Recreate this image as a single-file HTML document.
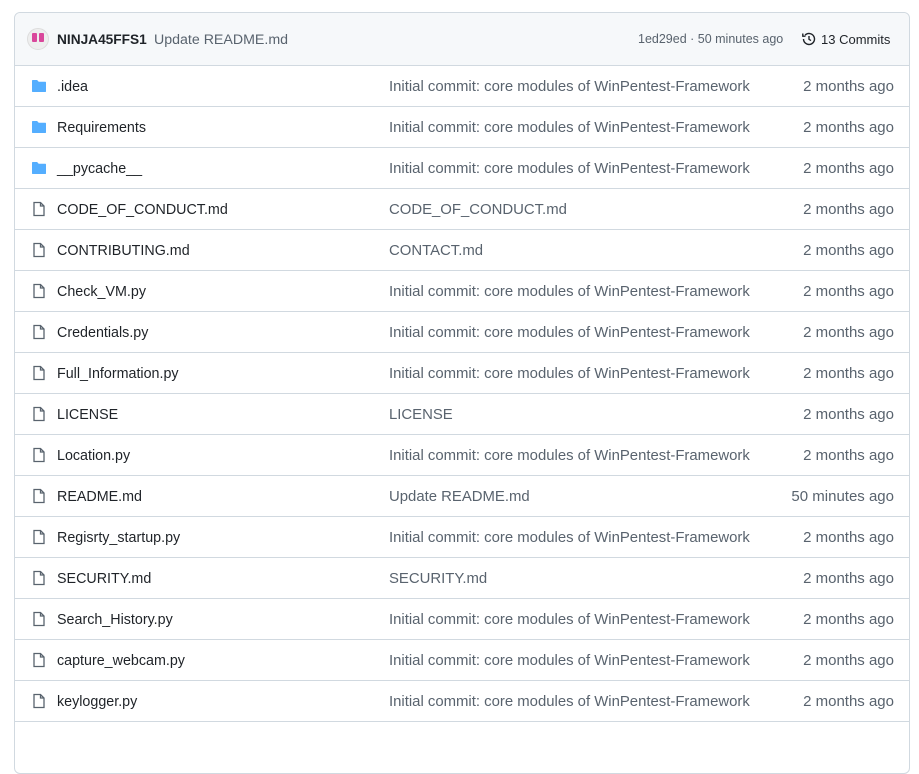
<!DOCTYPE html>
<html><head><style>
html,body{margin:0;background:#fff;width:919px;height:726px;overflow:hidden;font-family:"Liberation Sans",sans-serif;font-size:14px;color:#1f2328}
.box{position:absolute;left:14px;top:12px;width:894px;border:1px solid #d1d9e0;border-radius:6px;height:760px}
.hd{height:52px;background:#f6f8fa;border-bottom:1px solid #d1d9e0;position:relative;border-radius:6px 6px 0 0}
.row{height:40px;border-bottom:1px solid #d1d9e0;position:relative;line-height:40px}
.ic{position:absolute;left:16px;top:12px}
.nm{position:absolute;left:42px;top:1px;font-size:14.3px}
.msg{position:absolute;left:374px;top:1px;color:#59636e;font-size:14.9px}
.dt{position:absolute;right:15px;top:1px;color:#59636e;font-size:15px}
</style></head><body>
<div class="box">
<div class="hd">
<svg style="position:absolute;left:12px;top:15px" width="22" height="22" viewBox="0 0 22 22"><circle cx="11" cy="11" r="10.5" fill="#eee" stroke="#ddd"/><rect x="5" y="5" width="5" height="9" rx="1" fill="#d9479b"/><rect x="12" y="5" width="5" height="9" rx="1" fill="#d9479b"/></svg>
<span style="position:absolute;left:42px;top:19px;font-weight:bold;font-size:13.7px">NINJA45FFS1</span>
<span style="position:absolute;left:139px;top:19px;color:#59636e;font-size:14.2px">Update README.md</span>
<span style="position:absolute;left:623px;top:19px;color:#59636e;font-size:12.5px">1ed29ed · 50 minutes ago</span>
<svg style="position:absolute;left:786px;top:18px" width="16" height="16" viewBox="0 0 16 16" fill="none" stroke="#1f2328" stroke-width="1.4"><path d="M2.5 8a5.5 5.5 0 1 0 1.6-3.9"/><path d="M1.8 2.5v2.7h2.7"/><path d="M8 5v3.3l2 1.3"/></svg>
<span style="position:absolute;left:806px;top:19px;font-size:13px">13 Commits</span>
</div>
<div id="rows"></div>
</div>
<script>
var F='<svg class="ic" width="16" height="16" viewBox="0 0 16 16"><path d="M1 2.8C1 2.3 1.4 2 1.8 2h4.3l1.6 1.7h6.5c.5 0 .8.3.8.8v8.7c0 .5-.3.8-.8.8H1.8c-.4 0-.8-.3-.8-.8z" fill="#54aeff"/></svg>';
var D='<svg class="ic" width="16" height="16" viewBox="0 0 16 16" fill="none" stroke="#59636e" stroke-width="1.3"><path d="M3 1.5h6.5l3.5 3.5v9.5H3z"/><path d="M9.5 1.5V5H13"/></svg>';
var c="Initial commit: core modules of WinPentest-Framework",m="2 months ago";
var r=[[F,".idea",c,m],[F,"Requirements",c,m],[F,"__pycache__",c,m],[D,"CODE_OF_CONDUCT.md","CODE_OF_CONDUCT.md",m],[D,"CONTRIBUTING.md","CONTACT.md",m],[D,"Check_VM.py",c,m],[D,"Credentials.py",c,m],[D,"Full_Information.py",c,m],[D,"LICENSE","LICENSE",m],[D,"Location.py",c,m],[D,"README.md","Update README.md","50 minutes ago"],[D,"Regisrty_startup.py",c,m],[D,"SECURITY.md","SECURITY.md",m],[D,"Search_History.py",c,m],[D,"capture_webcam.py",c,m],[D,"keylogger.py",c,m]];
var h="";r.forEach(function(x){h+='<div class="row">'+x[0]+'<span class="nm">'+x[1]+'</span><span class="msg">'+x[2]+'</span><span class="dt">'+x[3]+'</span></div>'});
document.getElementById("rows").innerHTML=h;
</script>
</body></html>
